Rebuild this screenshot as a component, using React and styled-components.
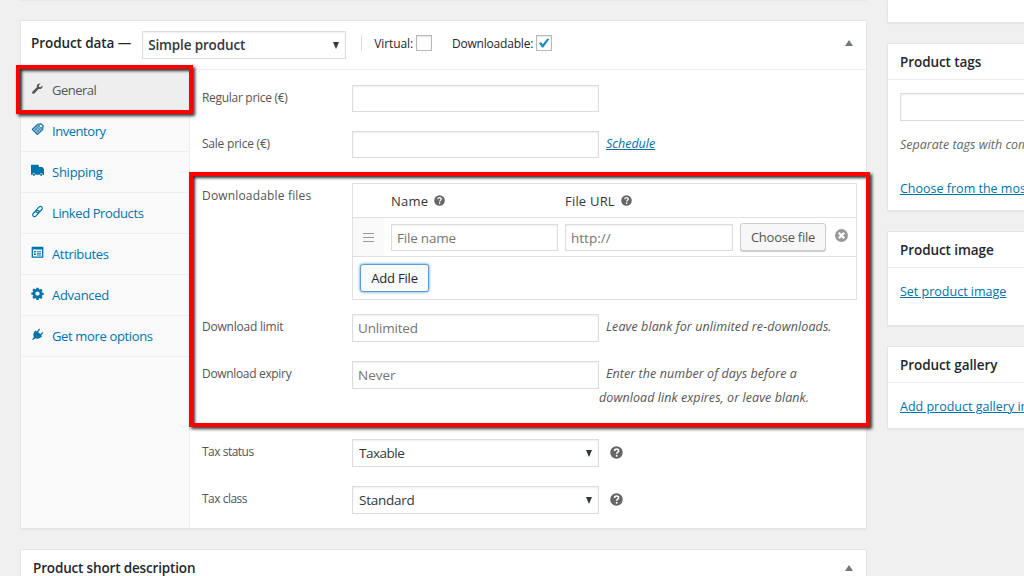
import React from "react";
import styled, { createGlobalStyle, css } from "styled-components";

const GlobalStyle = createGlobalStyle`
  * {
    box-sizing: border-box;
  }
  body {
    margin: 0;
    background: #f0f0f0;
    color: #555;
    font-family: "Open Sans", "Noto Sans", sans-serif;
    font-size: 13px;
    overflow: hidden;
  }
`;

const Page = styled.div`
  display: flex;
  gap: 20px;
  width: 1024px;
  height: 576px;
  padding-left: 20px;
  overflow: hidden;
`;
const MainColumn = styled.main`
  display: flex;
  flex-direction: column;
  gap: 20px;
  flex: 0 0 847px;
  margin-top: -1px;
`;
const SideColumn = styled.aside`
  display: flex;
  flex-direction: column;
  gap: 20px;
  flex: 0 0 280px;
`;
const Panel = styled.section`
  flex: 0 0 ${(p) => p.$height}px;
  background: #fff;
  border: 1px solid #e5e5e5;
  box-shadow: 0 1px 1px rgba(0, 0, 0, 0.04);
`;
const PanelEdge = styled(Panel)`
  border-top: none;
`;

const PanelHeader = styled.header`
  display: flex;
  align-items: center;
  height: ${(p) => p.$height || 36}px;
  padding: 0 13px ${(p) => p.$bottom || 0}px ${(p) => p.$left || 12}px;
  border-bottom: 1px solid #eee;
`;
const Title = styled.h2`
  margin: 0;
  color: #23282d;
  font-size: 13.5px;
  font-weight: 600;
  line-height: 20px;
  letter-spacing: ${(p) => p.$spacing || -0.08}px;
  white-space: nowrap;
`;
const Toggle = styled.span`
  margin-left: auto;
  border: 4px solid transparent;
  border-top: none;
  border-bottom: 6px solid #72777c;
`;
const Divider = styled.span`
  width: 1px;
  height: 16px;
  margin: 0 12px 0 15px;
  background: #ddd;
`;
const TypeLabel = styled.label`
  display: flex;
  align-items: center;
  gap: 3px;
  margin-right: 20px;
  color: #23282d;
  font-size: 12px;
  font-weight: 500;
  letter-spacing: ${(p) => p.$spacing || 0}px;
`;
const Checkbox = styled.span`
  display: flex;
  align-items: center;
  justify-content: center;
  width: 16px;
  height: 16px;
  border: 1px solid #b4b9be;
  background: #fff;
  box-shadow: inset 0 1px 2px rgba(0, 0, 0, 0.1);
`;

const PanelBody = styled.div`
  display: flex;
  height: 458px;
`;
const Tabs = styled.ul`
  flex: 0 0 169px;
  margin: 0;
  padding: 0;
  list-style: none;
  background: #fafafa;
  border-right: 1px solid #eee;
`;
const Tab = styled.li`
  position: relative;
  display: flex;
  gap: 8px;
  height: 41px;
  padding: 0 10px;
  border-bottom: 1px solid #eee;
  color: #0073aa;
  font-size: 13px;
  line-height: 41px;
  letter-spacing: ${(p) => p.$spacing || 0}px;
  white-space: nowrap;
  ${(p) =>
    p.$active &&
    css`
      background: #eee;
      color: #555;
    `}
  svg {
    flex: none;
    margin-top: 12px;
  }
`;
const Highlight = styled.div`
  position: absolute;
  z-index: 2;
  border: 4px solid #f00;
  box-shadow: 2px 2px 3px rgba(0, 0, 0, 0.8),
    inset 2px 2px 3px rgba(0, 0, 0, 0.8);
  pointer-events: none;
`;
const TabHighlight = styled(Highlight)`
  top: -5px;
  left: -5px;
  width: 177px;
  height: 49px;
`;
const FilesHighlight = styled(Highlight)`
  top: 102px;
  left: -1px;
  width: 681px;
  height: 255px;
`;

const Form = styled.div`
  position: relative;
  flex: 1;
  padding: 15px 9px 0 12px;
`;
const FormRow = styled.div`
  display: grid;
  grid-template-columns: 150px 1fr;
  align-items: start;
  height: ${(p) => p.$height}px;
`;
const Label = styled.label`
  font-size: 12px;
  line-height: 26px;
  letter-spacing: ${(p) => p.$spacing || 0}px;
`;
const Control = styled.div`
  display: flex;
  align-items: flex-start;
`;
const fieldBox = css`
  border: 1px solid #ddd;
  background: #fff;
  box-shadow: inset 0 1px 2px rgba(0, 0, 0, 0.07);
  color: #32373c;
  font-family: inherit;
  font-size: 13.5px;
`;
const Input = styled.input`
  ${fieldBox}
  flex: none;
  width: ${(p) => p.$width || 247}px;
  height: ${(p) => p.$height || 28}px;
  padding: 0 5px;
  border-radius: 0;
  letter-spacing: ${(p) => p.$spacing || 0}px;
  &::placeholder {
    color: #757575;
    opacity: 1;
  }
`;
const FileInput = styled(Input)`
  height: 27px;
  padding-top: 1px;
`;
const SelectBox = styled.div`
  ${fieldBox}
  display: flex;
  align-items: center;
  justify-content: space-between;
  width: ${(p) => p.$width || 247}px;
  height: 28px;
  padding: 0 6px;
  font-weight: ${(p) => p.$weight || 400};
  letter-spacing: ${(p) => p.$spacing || 0}px;
  &::after {
    content: "";
    border: 3.5px solid transparent;
    border-top: 7px solid #32373c;
    border-bottom: none;
  }
`;
const TypeSelect = styled(SelectBox)`
  margin-left: 11px;
  margin-top: 4px;
  padding: 0 6px 0 5px;
`;
const Description = styled.span`
  width: 240px;
  padding-top: 1px;
  font-size: 12.5px;
  font-style: italic;
  line-height: 24px;
  letter-spacing: ${(p) => p.$spacing || 0}px;
  text-indent: 7px;
  white-space: nowrap;
`;
const Link = styled.a`
  color: #0073aa;
  text-decoration: underline;
`;
const HelpSlot = styled.span`
  display: flex;
  margin: 7px 0 0 11px;
`;

const Files = styled.div`
  width: 505px;
  height: 117px;
  border: 1px solid #e1e1e1;
`;
const FilesRow = styled.div`
  display: grid;
  grid-template-columns: 31px 7px 167px 7px 168px 7px 86px 1fr;
  height: ${(p) => p.$height}px;
  border-bottom: 1px solid #e1e1e1;
`;
const FilesHeading = styled.div`
  grid-column: ${(p) => p.$column};
  display: flex;
  align-items: center;
  gap: 6px;
  color: #32373c;
  font-size: 13px;
  letter-spacing: ${(p) => p.$spacing || 0}px;
`;
const SortHandle = styled.div`
  display: flex;
  flex-direction: column;
  align-items: center;
  justify-content: center;
  gap: 3px;
  background: #f9f9f9;
`;
const SortBar = styled.i`
  width: 11px;
  height: 1px;
  background: #999;
`;
const FileCell = styled.div`
  grid-column: ${(p) => p.$column};
  display: flex;
  align-items: center;
`;
const RemoveCell = styled(FileCell)`
  justify-content: center;
  padding-bottom: 3px;
`;
const Button = styled.button`
  width: ${(p) => p.$width}px;
  height: 28px;
  padding: 0;
  border: 1px solid #ccc;
  border-radius: 3px;
  background: #f7f7f7;
  box-shadow: 0 1px 0 #ccc;
  color: #555;
  font-family: inherit;
  font-size: 13px;
  letter-spacing: ${(p) => p.$spacing || 0}px;
  ${(p) =>
    p.$focused &&
    css`
      margin: 7px;
      border-color: #5b9dd9;
      background: #fafafa;
      box-shadow: 0 0 3px rgba(0, 115, 170, 0.8);
      color: #23282d;
    `}
`;

const SideBody = styled.div`
  display: flex;
  flex-direction: column;
  align-items: flex-start;
  padding: ${(p) => p.$top || 14}px 12px 0;
  white-space: nowrap;
`;
const SideLink = styled(Link)`
  margin-top: ${(p) => p.$top || 0}px;
  font-size: 12.5px;
  line-height: 20px;
`;
const SideHint = styled.p`
  margin: 14px 0 0;
  color: #666;
  font-size: 12.5px;
  font-style: italic;
  line-height: 20px;
`;

const icons = {
  wrench: (
    <path d="M16.400 9.600c-1.300 1.300-3.200 1.600-4.800 1L5.200 17.500c-.8.8-2.100.8-2.900 0s-.8-2.100 0-2.900L9.200 8.200C8.500 6.600 8.900 4.700 10.200 3.400c1.200-1.200 3-1.600 4.600-1L12 5.200l.5 2.300 2.300.5 2.800-2.800c.6 1.500.1 3.200-1.200 4.400z" />
  ),
  inventory: (
    <>
      <path
        d="M10 2l5.500-.8 3.300 3-.8 6L9.800 17.800 1.800 9.800z"
        fill="#8fb9d4"
        stroke="currentColor"
        strokeWidth="1.600"
        strokeLinejoin="round"
      />
      <path
        d="M5 7l8 7.500M7.500 4.800l8 7.500M10.500 3l7 6.500M5 12.500l8-8.500M7.800 15l9-9"
        stroke="#3d7ba3"
        strokeWidth="1"
      />
      <circle cx="15.300" cy="4.600" r="1.500" fill="#fff" />
    </>
  ),
  truck: (
    <path d="M0 1h12v3.500h5.500L20 8v8.500h-2a2.300 2.300 0 0 0-4.600 0H6.800a2.300 2.300 0 0 0-4.600 0H0zM4.500 15a1.700 1.700 0 1 1 0 3.400 1.700 1.700 0 0 1 0-3.400zM15.700 15a1.700 1.700 0 1 1 0 3.400 1.700 1.700 0 0 1 0-3.400z" />
  ),
  link: (
    <path
      d="M8.500 11.500C7 10 7 8.500 8.500 7l3.700-3.800c1.500-1.500 3.100-1.400 4.300-.2s1.300 2.800-.2 4.300l-3.500 3.500c-1.300 1.300-2.700 1.300-4 .3M11.500 8.500c1.500 1.500 1.500 3 0 4.500l-3.700 3.800c-1.500 1.500-3.100 1.400-4.300.2s-1.300-2.800.2-4.300l3.500-3.500c1.300-1.300 2.700-1.300 4-.3"
      fill="none"
      stroke="currentColor"
      strokeWidth="1.800"
    />
  ),
  attributes: (
    <path
      fillRule="evenodd"
      d="M1 1h18v17H1zM3 5.500V16h14V5.500zM4.500 7.500h3v2.500h-3zM9 7.500h6.500V9H9zM9 10.500h6.500V12H9zM4.500 11.500h3V14h-3zM9 13.200h6.500v1.500H9z"
    />
  ),
  gear: (
    <path
      fillRule="evenodd"
      d="M8.300 1h3.400l.4 2.400 1.400.6 2-1.400 2.400 2.400-1.400 2 .6 1.400 2.400.4v3.400l-2.400.4-.6 1.400 1.400 2-2.400 2.400-2-1.400-1.400.6-.4 2.400H8.300l-.4-2.400-1.400-.6-2 1.400L2.100 15.600l1.400-2-.6-1.400-2.400-.4V8.400L2.900 8l.6-1.400-1.400-2 2.400-2.400 2 1.400L7.900 3zM10 6.800a3.300 3.300 0 1 0 0 6.600 3.300 3.300 0 0 0 0-6.600z"
    />
  ),
  plug: (
    <path d="M12 1.600c.9-.9 2.200.3 1.400 1.300L10.900 6l3.300 3.300 3-2.500c1-.8 2.200.5 1.300 1.400l-2.900 2.800 1.400 1.700c-2.700 3.600-6.900 4.600-10.200 3.100L2.800 18.300 1.800 17.300l2.600-3C2.700 11.100 3.600 6.900 6.900 4l2.200 1.500z" />
  ),
};

function Icon({ name }) {
  return (
    <svg width="13" height="13" viewBox="0 0 20 20" fill="currentColor">
      {icons[name]}
    </svg>
  );
}

function HelpIcon({ size = 13 }) {
  return (
    <svg width={size} height={size} viewBox="0 0 16 16">
      <circle cx="8" cy="8" r="7.700" fill="#666" />
      <path
        d="M5.600 6.200c0-3.200 5-3.200 5-.3 0 1.700-2.300 1.700-2.300 3.600"
        fill="none"
        stroke="#fff"
        strokeWidth="1.900"
      />
      <circle cx="8.200" cy="11.900" r="1.200" fill="#fff" />
    </svg>
  );
}

function RemoveIcon() {
  return (
    <svg width="13" height="13" viewBox="0 0 13 13">
      <circle cx="6.500" cy="6.500" r="6.500" fill="#999" />
      <path d="M3.800 3.800l5.400 5.400M9.200 3.800L3.800 9.200" stroke="#fff" strokeWidth="2.200" />
    </svg>
  );
}

function CheckMark() {
  return (
    <svg width="12" height="12" viewBox="0 0 12 12">
      <path d="M1 6.200L3 5l1.700 2.300L9.300 1.500 11.200 2.300 5.300 10.500H4z" fill="#1e8cbe" />
    </svg>
  );
}

const tabs = [
  { icon: "wrench", text: "General", spacing: -0.5, active: true },
  { icon: "inventory", text: "Inventory", spacing: -0.45 },
  { icon: "truck", text: "Shipping", spacing: -0.25 },
  { icon: "link", text: "Linked Products", spacing: -0.4 },
  { icon: "attributes", text: "Attributes", spacing: -0.35 },
  { icon: "gear", text: "Advanced", spacing: -0.3 },
  { icon: "plug", text: "Get more options", spacing: -0.35 },
];

function DownloadableFiles() {
  return (
    <Files>
      <FilesRow $height={34}>
        <FilesHeading $column="3" $spacing={0.2}>
          Name <HelpIcon size={11} />
        </FilesHeading>
        <FilesHeading $column="5" $spacing={0.2}>
          File URL <HelpIcon size={11} />
        </FilesHeading>
      </FilesRow>
      <FilesRow $height={39}>
        <SortHandle>
          <SortBar />
          <SortBar />
          <SortBar />
        </SortHandle>
        <FileCell $column="3">
          <FileInput $width={167} $spacing={-0.2} placeholder="File name" />
        </FileCell>
        <FileCell $column="5">
          <FileInput $width={168} placeholder="http://" />
        </FileCell>
        <FileCell $column="7">
          <Button $width={86} $spacing={-0.25}>
            Choose file
          </Button>
        </FileCell>
        <RemoveCell $column="8">
          <RemoveIcon />
        </RemoveCell>
      </FilesRow>
      <Button $width={69} $spacing={-0.2} $focused>
        Add File
      </Button>
    </Files>
  );
}

function ProductForm() {
  return (
    <Form>
      <FormRow $height={46}>
        <Label $spacing={-0.3}>Regular price (€)</Label>
        <Input $height={27} />
      </FormRow>
      <FormRow $height={52}>
        <Label $spacing={-0.22}>Sale price (€)</Label>
        <Control>
          <Input $height={27} />
          <Description>
            <Link>Schedule</Link>
          </Description>
        </Control>
      </FormRow>
      <FormRow $height={131}>
        <Label $spacing={0.17}>Downloadable files</Label>
        <DownloadableFiles />
      </FormRow>
      <FormRow $height={47}>
        <Label $spacing={-0.22}>Download limit</Label>
        <Control>
          <Input $spacing={-0.2} placeholder="Unlimited" />
          <Description $spacing={0.1}>
            Leave blank for unlimited re-downloads.
          </Description>
        </Control>
      </FormRow>
      <FormRow $height={78}>
        <Label $spacing={-0.33}>Download expiry</Label>
        <Control>
          <Input placeholder="Never" />
          <Description $spacing={0.07}>
            Enter the number of days before a<br />
            download link expires, or leave blank.
          </Description>
        </Control>
      </FormRow>
      <FormRow $height={47}>
        <Label $spacing={-0.5}>Tax status</Label>
        <Control>
          <SelectBox $spacing={-0.5}>Taxable</SelectBox>
          <HelpSlot>
            <HelpIcon />
          </HelpSlot>
        </Control>
      </FormRow>
      <FormRow $height={42}>
        <Label $spacing={-0.5}>Tax class</Label>
        <Control>
          <SelectBox $spacing={-0.25}>Standard</SelectBox>
          <HelpSlot>
            <HelpIcon />
          </HelpSlot>
        </Control>
      </FormRow>
      <FilesHighlight />
    </Form>
  );
}

function App() {
  return (
    <>
      <GlobalStyle />
      <Page>
        <MainColumn>
          <PanelEdge $height={0} />
          <Panel $height={509}>
            <PanelHeader $height={49} $left={10} $bottom={4}>
              <Title>Product data —</Title>
              <TypeSelect $width={204} $weight={600} $spacing={-0.15}>
                Simple product
              </TypeSelect>
              <Divider />
              <TypeLabel $spacing={-0.1}>
                Virtual: <Checkbox />
              </TypeLabel>
              <TypeLabel $spacing={-0.2}>
                Downloadable:{" "}
                <Checkbox>
                  <CheckMark />
                </Checkbox>
              </TypeLabel>
              <Toggle />
            </PanelHeader>
            <PanelBody>
              <Tabs>
                {tabs.map((tab) => (
                  <Tab key={tab.text} $active={tab.active} $spacing={tab.spacing}>
                    <Icon name={tab.icon} />
                    <span>{tab.text}</span>
                    {tab.active && <TabHighlight />}
                  </Tab>
                ))}
              </Tabs>
              <ProductForm />
            </PanelBody>
          </Panel>
          <Panel $height={100}>
            <PanelHeader>
              <Title $spacing={-0.16}>Product short description</Title>
              <Toggle />
            </PanelHeader>
          </Panel>
        </MainColumn>
        <SideColumn>
          <PanelEdge $height={23} />
          <Panel $height={168}>
            <PanelHeader>
              <Title>Product tags</Title>
            </PanelHeader>
            <SideBody $top={13}>
              <Input $width={180} />
              <SideHint>Separate tags with commas</SideHint>
              <SideLink $top={24}>Choose from the most used tags</SideLink>
            </SideBody>
          </Panel>
          <Panel $height={95}>
            <PanelHeader>
              <Title>Product image</Title>
            </PanelHeader>
            <SideBody>
              <SideLink>Set product image</SideLink>
            </SideBody>
          </Panel>
          <Panel $height={83}>
            <PanelHeader>
              <Title>Product gallery</Title>
            </PanelHeader>
            <SideBody>
              <SideLink>Add product gallery images</SideLink>
            </SideBody>
          </Panel>
        </SideColumn>
      </Page>
    </>
  );
}

export default App;
